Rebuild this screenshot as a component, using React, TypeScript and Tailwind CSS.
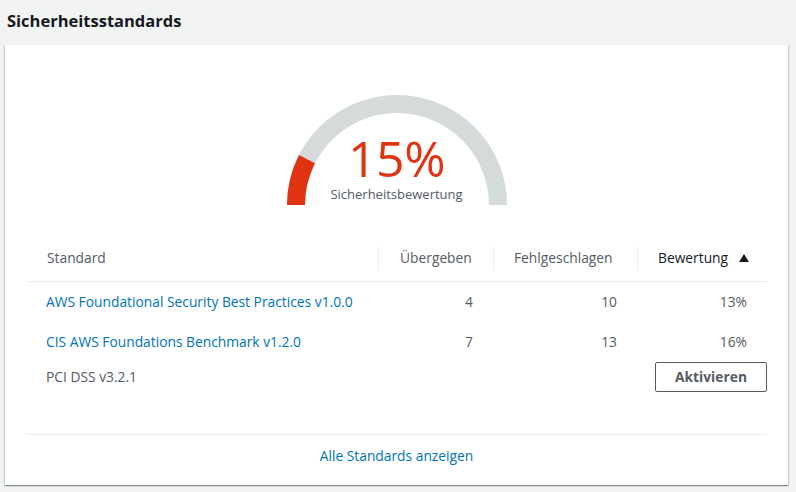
import React from "react";

const font = { fontFamily: '"Open Sans", "Noto Sans", Arial, sans-serif' };

function Gauge() {
  return (
    <div className="relative w-[220px] h-[111px]">
      <svg width="220" height="111" viewBox="0 0 220 111" className="absolute left-0 top-0">
        <path d="M 9 110 A 101 101 0 0 1 211 110" fill="none" stroke="#d5dbdb" strokeWidth="18" />
        <path d="M 9 110 A 101 101 0 0 1 20.01 64.15" fill="none" stroke="#df3312" strokeWidth="18" />
      </svg>
      <div className="absolute left-0 right-0 top-[42px] flex flex-col items-center">
        <div className="text-[50px] leading-[42px] text-[#df3312] tracking-[-0.5px]">15%</div>
        <div className="text-[13px] leading-[16px] text-[#545b64] mt-[7px]">Sicherheitsbewertung</div>
      </div>
    </div>
  );
}

export default function App() {
  return (
    <div className="w-[796px] h-[492px] bg-[#f2f3f3] overflow-hidden" style={font}>
      <div className="h-[45px] pl-[7px] pt-[9px] text-[16.5px] font-bold text-[#16191f] leading-[24px]">
        Sicherheitsstandards
      </div>
      <div className="ml-[5px] w-[783px] h-[440px] bg-white shadow-[0_1px_1px_0_rgba(0,28,36,0.3),1px_1px_1px_0_rgba(0,28,36,0.15),-1px_1px_1px_0_rgba(0,28,36,0.15)] px-[21px] flex flex-col">
        <div className="flex justify-center pt-[50px]">
          <Gauge />
        </div>
        <div className="mt-[28px] text-[13.8px] text-[#545b64]">
          <div className="flex h-[48px] items-center border-b border-[#eaeded]">
            <div className="w-[352px] pl-[21px] h-[24px] leading-[24px]">Standard</div>
            <div className="w-[115px] pl-[21px] h-[24px] leading-[24px] border-l border-[#eaeded]">Übergeben</div>
            <div className="w-[144px] pl-[20px] h-[24px] leading-[24px] border-l border-[#eaeded]">Fehlgeschlagen</div>
            <div className="flex-1 pl-[20px] h-[24px] leading-[24px] border-l border-[#eaeded] flex items-center text-[#16191f]">
              <span className="text-[#16191f]">Bewertung</span>
              <svg width="12" height="10" viewBox="0 0 12 10" className="ml-[10px]">
                <path d="M6 1 L11 9 L1 9 Z" fill="#16191f" />
              </svg>
            </div>
          </div>
          <div className="flex h-[41px] items-center">
            <div className="w-[352px] pl-[20px] text-[#0073bb]">AWS Foundational Security Best Practices v1.0.0</div>
            <div className="w-[115px] pr-[20px] text-right">4</div>
            <div className="w-[144px] pr-[20px] text-right">10</div>
            <div className="flex-1 pr-[20px] text-right">13%</div>
          </div>
          <div className="flex h-[39px] items-center">
            <div className="w-[352px] pl-[20px] text-[#0073bb]">CIS AWS Foundations Benchmark v1.2.0</div>
            <div className="w-[115px] pr-[20px] text-right">7</div>
            <div className="w-[144px] pr-[20px] text-right">13</div>
            <div className="flex-1 pr-[20px] text-right">16%</div>
          </div>
          <div className="flex h-[30px] items-center justify-between">
            <div className="pl-[20px]">PCI DSS v3.2.1</div>
            <div className="w-[112px] h-[30px] border border-[#545b64] rounded-[2px] flex items-center justify-center font-bold text-[#545b64]">
              Aktivieren
            </div>
          </div>
        </div>
        <div className="mt-auto border-t border-[#eaeded] h-[51px] pt-[11px] flex justify-center text-[13.8px] leading-[20px] text-[#0073bb]">
          Alle Standards anzeigen
        </div>
      </div>
    </div>
  );
}
